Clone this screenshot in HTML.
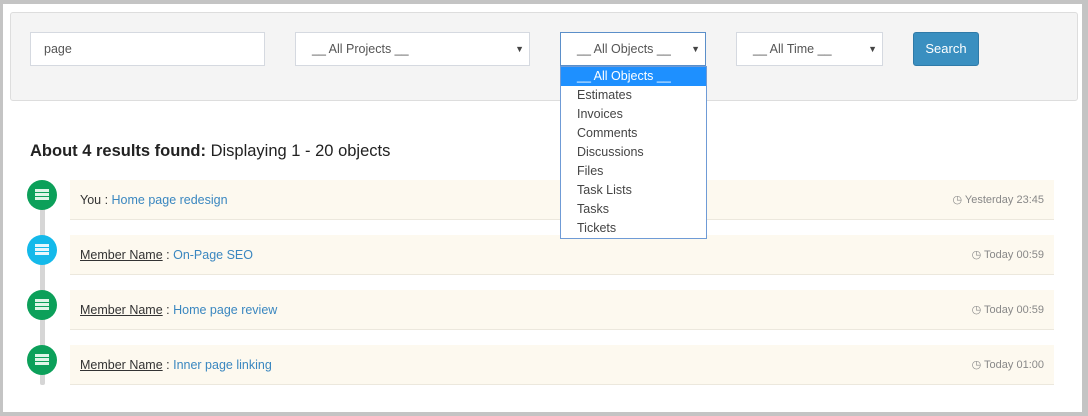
<!DOCTYPE html>
<html><head><style>
*{box-sizing:border-box;margin:0;padding:0}
body{width:1088px;height:416px;background:#c4c4c4;font-family:"Liberation Sans",sans-serif;font-size:13px;color:#333;position:relative;overflow:hidden}
#main{position:absolute;left:3px;top:4px;width:1079px;height:408px;background:#fff}
.abs{position:absolute}
.panel{left:7px;top:8px;width:1068px;height:89px;background:#f4f4f4;border:1px solid #ddd;border-radius:3px}
.fld{background:#fff;border:1px solid #d5d9e0;height:34px;top:28px;line-height:32px;padding-left:13px;color:#555;font-size:12.5px}
.arr{position:absolute;right:5px;top:0;font-size:9px;color:#444}
.btn{left:910px;top:28px;width:66px;height:34px;background:#3a8fc0;border:1px solid #2f7aa8;border-radius:3px;color:#fff;text-align:center;line-height:32px}
.dd{left:557px;top:62px;width:147px;height:173px;background:#fff;border:1px solid #6f9bd6;font-size:12.5px}
.dd div{height:19px;line-height:19px;padding-left:16px;color:#444}
.dd .sel{background:#1e90ff;color:#fff}
h3{position:absolute;left:27px;top:138px;font-size:16.5px;font-weight:normal;color:#222}
.row{left:67px;width:984px;height:40px;background:#fdf9ef;border-bottom:1px solid #ece8dd;line-height:40px;padding-left:10px;font-size:12.5px}
.row a{color:#3a87c0;text-decoration:none}
.row u{color:#333}
.t{position:absolute;right:10px;top:0;font-size:11px;color:#888}
.c{width:30px;height:30px;border-radius:50%;left:24px;background:#0ca05a}
.c i{position:absolute;left:8px;top:9px;width:14px;height:12px;background:repeating-linear-gradient(#dff5e8 0 3px,#0ca05a 3px 4px)}
.line{left:37px;top:195px;width:5px;height:186px;background:#d6d6d6;border-radius:2px}
</style></head><body><div id="main">
<div class="abs panel"></div>
<div class="abs fld" style="left:27px;width:235px">page</div>
<div class="abs fld" style="left:292px;width:235px;padding-left:16px">__ All Projects __<span class="arr">▼</span></div>
<div class="abs fld" style="left:557px;width:146px;padding-left:16px;border-color:#5b8fc9">__ All Objects __<span class="arr">▼</span></div>
<div class="abs fld" style="left:733px;width:147px;padding-left:16px">__ All Time __<span class="arr">▼</span></div>
<div class="abs btn">Search</div>
<h3><b>About 4 results found:</b> Displaying 1 - 20 objects</h3>
<div class="abs line"></div>
<div class="abs c" style="top:176px"><i></i></div>
<div class="abs c" style="top:231px;background:#14b9ea"><i style="background:repeating-linear-gradient(#e6f7fd 0 3px,#14b9ea 3px 4px)"></i></div>
<div class="abs c" style="top:286px"><i></i></div>
<div class="abs c" style="top:341px"><i></i></div>
<div class="abs row" style="top:176px">You : <a>Home page redesign</a><span class="t">◷ Yesterday 23:45</span></div>
<div class="abs row" style="top:231px"><u>Member Name</u> : <a>On-Page SEO</a><span class="t">◷ Today 00:59</span></div>
<div class="abs row" style="top:286px"><u>Member Name</u> : <a>Home page review</a><span class="t">◷ Today 00:59</span></div>
<div class="abs row" style="top:341px"><u>Member Name</u> : <a>Inner page linking</a><span class="t">◷ Today 01:00</span></div>
<div class="abs dd"><div class="sel">__ All Objects __</div><div>Estimates</div><div>Invoices</div><div>Comments</div><div>Discussions</div><div>Files</div><div>Task Lists</div><div>Tasks</div><div>Tickets</div></div>
</div></body></html>
